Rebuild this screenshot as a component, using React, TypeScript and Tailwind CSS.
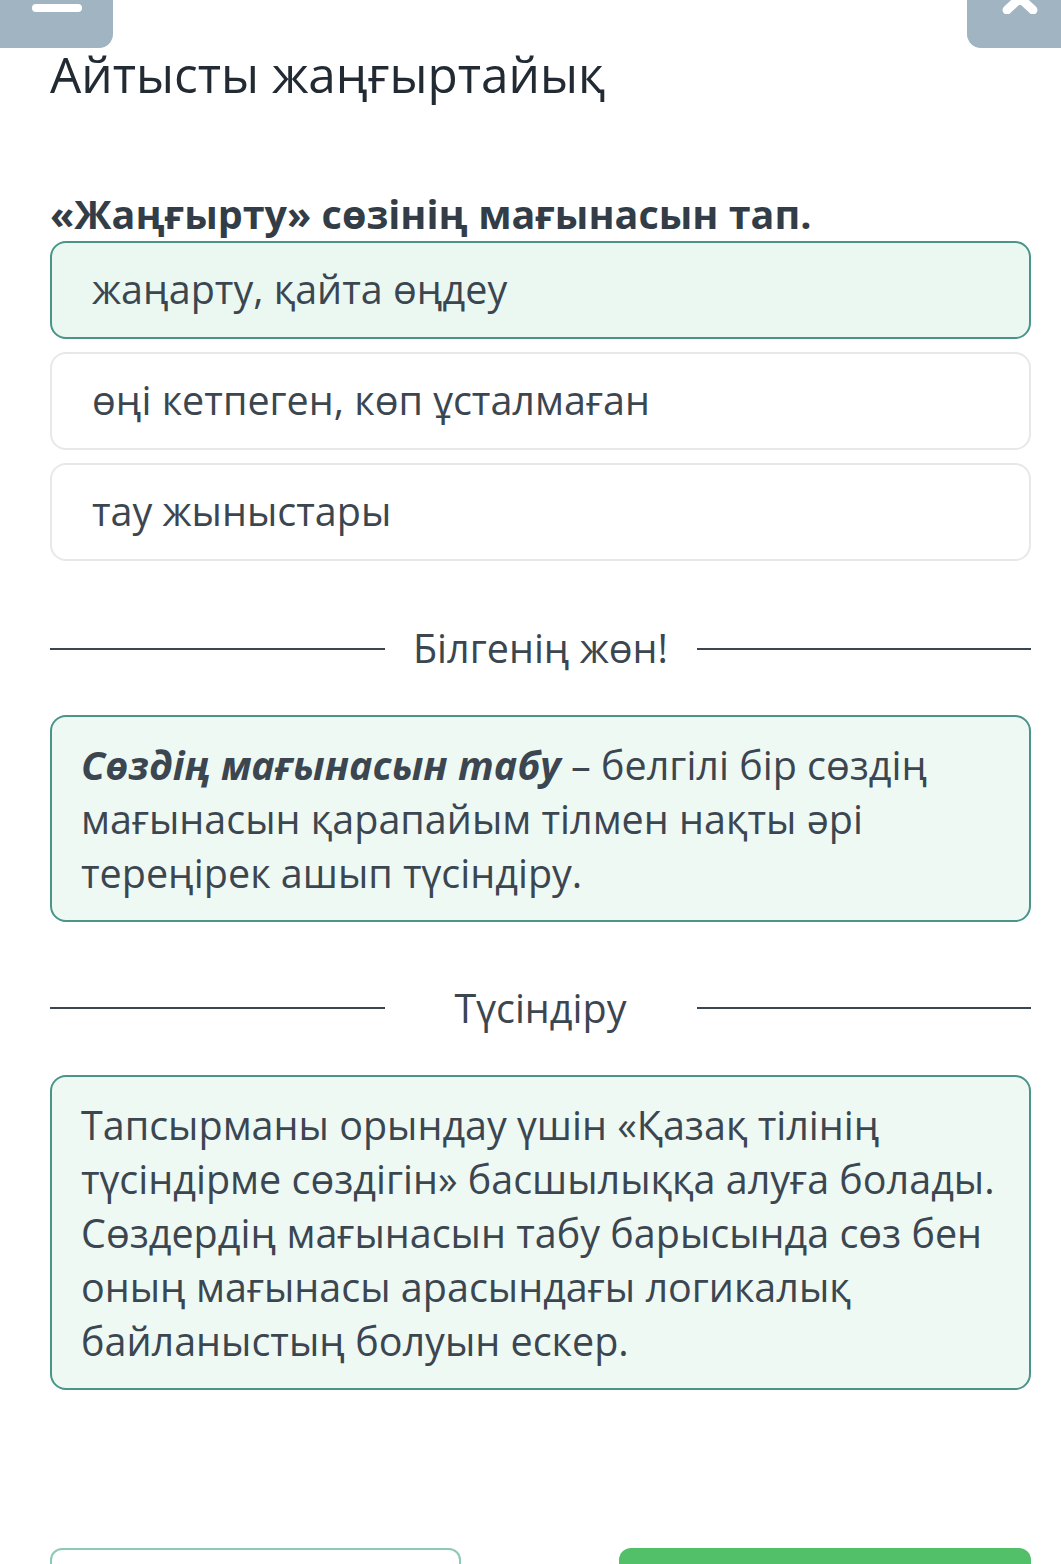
import React from 'react';

const font = { fontFamily: '"Open Sans", "Noto Sans", sans-serif' };

function Divider({ label }: { label: string }) {
  return (
    <div className="flex items-center">
      <div className="flex-1 h-[2px] bg-[#3c4650]" />
      <span className="w-[312px] text-center text-[39.5px] text-[#3c4650] leading-none">{label}</span>
      <div className="flex-1 h-[2px] bg-[#3c4650]" />
    </div>
  );
}

const options = [
  { text: 'жаңарту, қайта өңдеу', selected: true },
  { text: 'өңі кетпеген, көп ұсталмаған', selected: false },
  { text: 'тау жыныстары', selected: false },
];

export default function App() {
  return (
    <div style={font} className="relative w-[1061px] h-[1564px] bg-white overflow-hidden text-[#3c4650]">
      <div className="absolute left-0 top-0 w-[113px] h-[48px] bg-[#a1b4c1] rounded-br-[14px]">
        <div className="absolute left-[32px] top-[4px] w-[50px] h-[8px] bg-white rounded-sm" />
      </div>
      <div className="absolute right-0 top-0 w-[94px] h-[48px] bg-[#a1b4c1] rounded-bl-[14px]">
        <svg className="absolute left-[34px] top-[-14px]" width="38" height="28" viewBox="0 0 38 28">
          <path d="M6 0 L19 12 L32 0 M6 24 L19 12 L32 24" stroke="white" strokeWidth="9" strokeLinecap="round" fill="none" />
        </svg>
      </div>

      <div className="pl-[50px] pr-[30px] pt-[44px]">
        <h1 className="text-[49.5px] leading-[60px] text-[#222b33]">Айтысты жаңғыртайық</h1>
        <p className="mt-[88px] text-[39.5px] font-bold leading-[44px] text-[#333d47]">«Жаңғырту» сөзінің мағынасын тап.</p>

        <div className="mt-[5px] flex flex-col gap-[13px]">
          {options.map((o) => (
            <div
              key={o.text}
              className={`h-[98px] rounded-[16px] border-2 flex items-center pl-[40px] text-[39.5px] ${
                o.selected ? 'border-[#4a9489] bg-[#ebf8f2]' : 'border-[#e6e8ea] bg-white'
              }`}
            >
              {o.text}
            </div>
          ))}
        </div>

        <div className="mt-[68px]">
          <Divider label="Білгенің жөн!" />
        </div>

        <div className="mt-[46px] rounded-[16px] border-2 border-[#4a9489] bg-[#eef9f4] px-[29px] pt-[21px] pb-[20px] text-[39.5px] leading-[54px]">
          <span className="font-bold italic">Сөздің мағынасын табу</span> – белгілі бір сөздің мағынасын қарапайым тілмен нақты әрі тереңірек ашып түсіндіру.
        </div>

        <div className="mt-[67px]">
          <Divider label="Түсіндіру" />
        </div>

        <div className="mt-[47px] rounded-[16px] border-2 border-[#4a9489] bg-[#eef9f4] pl-[29px] pr-[20px] pt-[21px] pb-[20px] text-[39.5px] leading-[54px]">
          Тапсырманы орындау үшін «Қазақ тілінің түсіндірме сөздігін» басшылыққа алуға болады. Сөздердің мағынасын табу барысында сөз бен оның мағынасы арасындағы логикалық байланыстың болуын ескер.
        </div>

        <div className="mt-[158px] flex justify-between">
          <div className="w-[411px] h-[60px] rounded-[12px] border-2 border-[#8ccab4] bg-white" />
          <div className="w-[412px] h-[60px] rounded-[12px] bg-[#52c069]" />
        </div>
      </div>
    </div>
  );
}
